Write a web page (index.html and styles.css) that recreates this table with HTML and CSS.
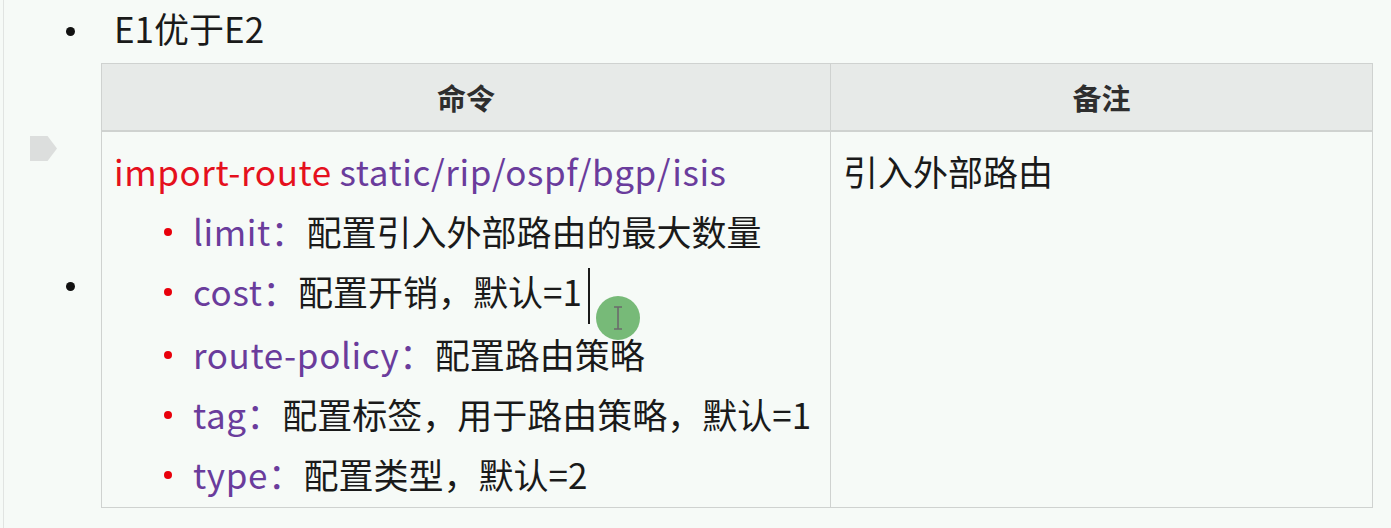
FILE: index.html
```html
<!DOCTYPE html>
<html lang="zh-CN">
<head>
<meta charset="UTF-8">
<title>import-route</title>
<link rel="stylesheet" href="styles.css">
</head>
<body>

<div class="page">
<ul class="outline">
    <li>E1优于E2</li>
    <li class="table-item">
        <span class="gutter-tag"></span>
        <table class="cmd-table">
            <thead>
                <tr>
                    <th class="col-cmd">命令</th>
                    <th>备注</th>
                </tr>
            </thead>
            <tbody>
                <tr>
                    <td>
                        <div class="cmd"><span class="kw">import-route</span> <span class="arg">static/rip/ospf/bgp/isis</span></div>
                        <ul class="opts">
                            <li><span class="arg">limit：</span>配置引入外部路由的最大数量</li>
                            <li><span class="arg">cost：</span>配置开销，默认=1<span class="caret"></span></li>
                            <li><span class="arg">route-policy：</span>配置路由策略</li>
                            <li><span class="arg">tag：</span>配置标签，用于路由策略，默认=1</li>
                            <li><span class="arg">type：</span>配置类型，默认=2</li>
                        </ul>
                    </td>
                    <td>引入外部路由</td>
                </tr>
            </tbody>
        </table>
    </li>
</ul>
</div>

<div class="pointer">
    <svg width="14" height="26" viewBox="0 0 14 26">
        <path d="M3 2h8M7 2v22M3 24h8" stroke="#6b6b6b" stroke-width="1.6" fill="none"/>
    </svg>
</div>

</body>
</html>
```

FILE: styles.css
```css
body {
    margin: 0;
    background: #f6faf7;
    font-family: "Noto Sans CJK SC", sans-serif;
    color: #1a1a1a;
}

.page {
    margin-left: 3px;
    border-left: 1px solid #e1e4e2;
    min-height: 528px;
}

.outline {
    list-style: none;
    margin: 0;
    padding: 3px 0 0 110px;
    font-size: 35px;
}

.outline > li {
    position: relative;
    line-height: 50px;
}

.outline > li::before {
    content: "";
    position: absolute;
    left: -48px;
    top: 24px;
    width: 9px;
    height: 9px;
    border-radius: 50%;
    background: #111;
}

.outline > li.table-item {
    padding-top: 10px;
}

.outline > li.table-item::before {
    top: 229px;
}

.gutter-tag {
    position: absolute;
    left: -84px;
    top: 83px;
    width: 27px;
    height: 25px;
    background: #dcdedd;
    clip-path: polygon(0 0, 65% 0, 100% 50%, 65% 100%, 0 100%);
}

.cmd-table {
    margin-left: -13px;
    width: 1272px;
    border-collapse: collapse;
    border: 1px solid #cfd2d0;
}

.cmd-table th {
    background: #e7eae8;
    font-size: 29px;
    font-weight: bold;
    color: #2e2e2e;
    height: 66px;
    padding: 0;
    border: 1px solid #cfd2d0;
    border-bottom-width: 2px;
    line-height: 40px;
}

.cmd-table .col-cmd {
    width: 728px;
}

.cmd-table td {
    vertical-align: top;
    padding: 9px 12px 3px;
    border: 1px solid #cfd2d0;
    line-height: 60px;
}

.kw {
    color: #e5101d;
    letter-spacing: 0.6px;
}

.arg {
    color: #6a3c9c;
    letter-spacing: 0.6px;
}

.opts {
    list-style: none;
    margin: 0;
    padding-left: 79px;
}

.opts li {
    position: relative;
}

.opts li::before {
    content: "";
    position: absolute;
    left: -29px;
    top: 27px;
    width: 8px;
    height: 8px;
    border-radius: 50%;
    background: #e8000b;
}

.caret {
    display: inline-block;
    width: 2px;
    height: 56px;
    margin-left: 6px;
    background: #1a1a1a;
    vertical-align: -18px;
}

.pointer {
    position: absolute;
    left: 596px;
    top: 296px;
    width: 44px;
    height: 44px;
    border-radius: 50%;
    background: rgba(88, 170, 88, 0.8);
    display: flex;
    align-items: center;
    justify-content: center;
}
```
